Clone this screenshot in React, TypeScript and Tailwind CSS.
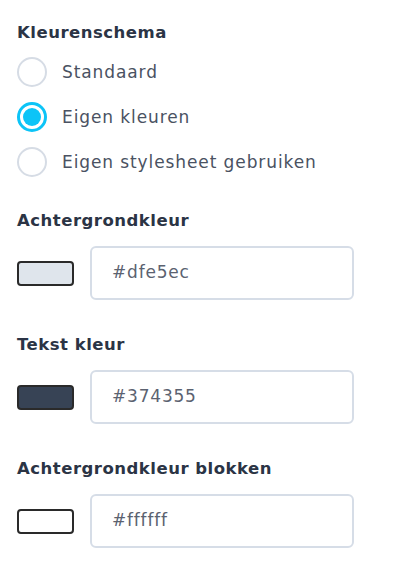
const options = ['Standaard', 'Eigen kleuren', 'Eigen stylesheet gebruiken'];

const colors: Array<{ label: string; value: string; swatch: string }> = [
  { label: 'Achtergrondkleur', value: '#dfe5ec', swatch: 'bg-[#dfe5ec]' },
  { label: 'Tekst kleur', value: '#374355', swatch: 'bg-[#374355]' },
  { label: 'Achtergrondkleur blokken', value: '#ffffff', swatch: 'bg-white' },
];

function Radio({ checked }: { checked: boolean }) {
  if (checked) {
    return (
      <span className="flex size-[30px] shrink-0 items-center justify-center rounded-full border-[3px] border-[#0cc4f7]">
        <span className="size-[18px] rounded-full bg-[#0cc4f7]" />
      </span>
    );
  }
  return <span className="size-[30px] shrink-0 rounded-full border-2 border-[#d6dce5]" />;
}

export default function App() {
  const selected = 1;

  return (
    <div className="min-h-[575px] bg-white px-[17px] pt-[23px] font-['DejaVu_Sans',sans-serif]">
      <h3 className="text-[16.5px] font-bold leading-5 tracking-[0.5px] text-[#2b3445]">Kleurenschema</h3>
      <div className="mt-[14px] flex flex-col gap-[15px]">
        {options.map((option, i) => (
          <label key={option} className="flex items-center gap-[15px]">
            <Radio checked={i === selected} />
            <span className="text-[17px] leading-6 tracking-[0.9px] text-[#4a5262]">{option}</span>
          </label>
        ))}
      </div>

      <div className="mt-[34px] flex flex-col gap-[35px]">
        {colors.map((c) => (
          <div key={c.label}>
            <h3 className="text-[16.5px] font-bold leading-5 tracking-[0.5px] text-[#2b3445]">{c.label}</h3>
            <div className="mt-[15px] flex items-center gap-[16px]">
              <span className={`h-[25px] w-[57px] rounded-[4px] border-2 border-[#2a2a2a] ${c.swatch}`} />
              <div className="flex h-[54px] w-[264px] items-center rounded-[6px] border-2 border-[#d6dde7] px-[20px] text-[17px] tracking-[0.8px] text-[#5b6270]">
                {c.value}
              </div>
            </div>
          </div>
        ))}
      </div>
    </div>
  );
}
